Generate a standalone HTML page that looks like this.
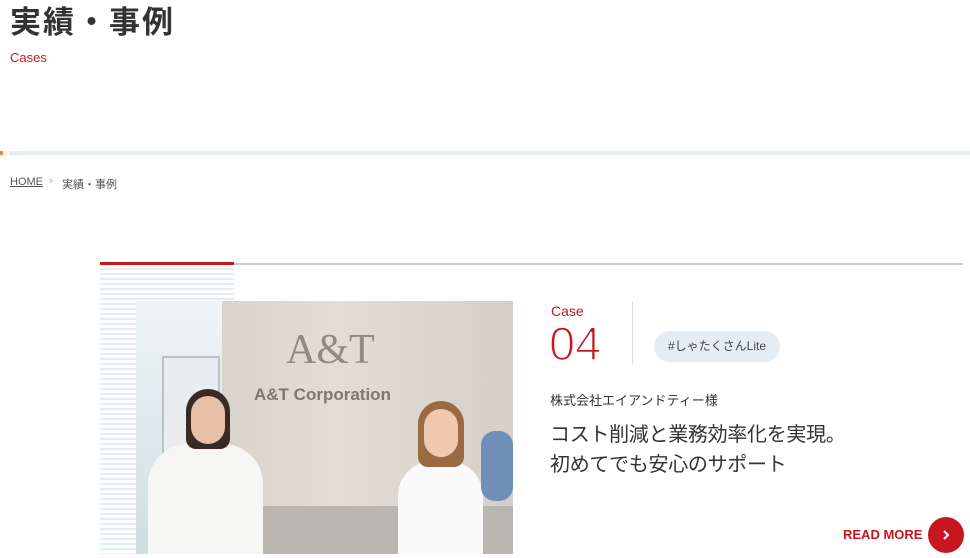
<!DOCTYPE html>
<html><head><meta charset="utf-8"><style>
*{margin:0;padding:0;box-sizing:border-box}
body{width:970px;height:554px;overflow:hidden;background:#fff;font-family:"Liberation Sans","Noto Sans CJK JP",sans-serif;position:relative;color:#333}
.a{position:absolute}
</style></head><body>
<div class="a" style="left:10px;top:3px;font-size:31px;font-weight:bold;color:#333;letter-spacing:2px;line-height:40px">実績・事例</div>
<div class="a" style="left:10px;top:50px;font-size:13px;color:#c8161e">Cases</div>
<div class="a" style="left:0;top:151px;width:3px;height:4px;background:#e8873a"></div>
<div class="a" style="left:9px;top:151px;width:961px;height:4px;background:#e6edf4"></div>
<div class="a" style="left:10px;top:176px;font-size:11px;color:#555;text-decoration:underline">HOME</div>
<div class="a" style="left:49px;top:175px;font-size:11px;color:#aaa">›</div>
<div class="a" style="left:62px;top:176px;font-size:11px;color:#555">実績・事例</div>
<div class="a" style="left:100px;top:262px;width:134px;height:3px;background:#c8161e"></div>
<div class="a" style="left:234px;top:263px;width:729px;height:2px;background:#c5d0db"></div>
<div class="a" style="left:100px;top:265px;width:134px;height:289px;background:repeating-linear-gradient(#fff 0 3px,#e4ecf4 3px 5px)"></div>
<div class="a" style="left:136px;top:301px;width:377px;height:253px;background:linear-gradient(90deg,#e4eef0 0,#d6e3e6 86px,#d8d4cc 86px,#e2ded6 200px,#d4d0c8 377px);overflow:hidden">
  <div class="a" style="left:0;top:0;width:86px;height:253px;background:linear-gradient(#eef5f6,#cfdde0)"></div>
  <div class="a" style="left:26px;top:55px;width:58px;height:198px;background:#e8eef0;border:2px solid #b8c4c8"></div>
  <div class="a" style="left:150px;top:25px;font-family:'Liberation Serif',serif;font-size:42px;color:#8f8a84">A&amp;T</div>
  <div class="a" style="left:118px;top:84px;font-size:17px;font-weight:bold;color:#7c7872">A&amp;T Corporation</div>
  <div class="a" style="left:86px;top:205px;width:291px;height:48px;background:#b9b6b0"></div>
  <div class="a" style="left:12px;top:143px;width:115px;height:110px;background:#f6f6f4;border-radius:40px 40px 0 0"></div>
  <div class="a" style="left:50px;top:88px;width:44px;height:60px;background:#3a2a24;border-radius:22px 22px 10px 10px"></div>
  <div class="a" style="left:55px;top:95px;width:34px;height:48px;background:#e8c0a8;border-radius:17px"></div>
  <div class="a" style="left:262px;top:160px;width:85px;height:93px;background:#fafafa;border-radius:35px 35px 0 0"></div>
  <div class="a" style="left:282px;top:100px;width:46px;height:66px;background:#9a6a40;border-radius:23px 23px 10px 10px"></div>
  <div class="a" style="left:288px;top:108px;width:34px;height:48px;background:#f0c8b0;border-radius:17px"></div>
  <div class="a" style="left:345px;top:130px;width:32px;height:70px;background:#6f8fb8;border-radius:14px"></div>
</div>
<div class="a" style="left:551px;top:303px;font-size:14px;color:#c8161e">Case</div>
<div class="a" style="left:549px;top:319px;font-size:47px;color:#c8161e;line-height:50px;-webkit-text-stroke:1.6px #fff">04</div>
<div class="a" style="left:632px;top:301px;width:1px;height:63px;background:#ddd"></div>
<div class="a" style="left:654px;top:331px;width:126px;height:31px;border-radius:16px;background:#e4edf5;font-size:12px;color:#444;text-align:center;line-height:31px">#しゃたくさんLite</div>
<div class="a" style="left:550px;top:390px;font-size:13px;color:#333">株式会社エイアンドティー様</div>
<div class="a" style="left:550px;top:420px;font-size:20px;color:#333;line-height:30px;letter-spacing:-0.3px">コスト削減と業務効率化を実現。<br>初めてでも安心のサポート</div>
<div class="a" style="left:843px;top:527px;font-size:13px;font-weight:bold;color:#c8161e">READ MORE</div>
<div class="a" style="left:928px;top:517px;width:36px;height:36px;border-radius:50%;background:#c8161e"><svg width="36" height="36"><path d="M16 14l4 4-4 4" stroke="#fff" stroke-width="2" fill="none"/></svg></div>
</body></html>
